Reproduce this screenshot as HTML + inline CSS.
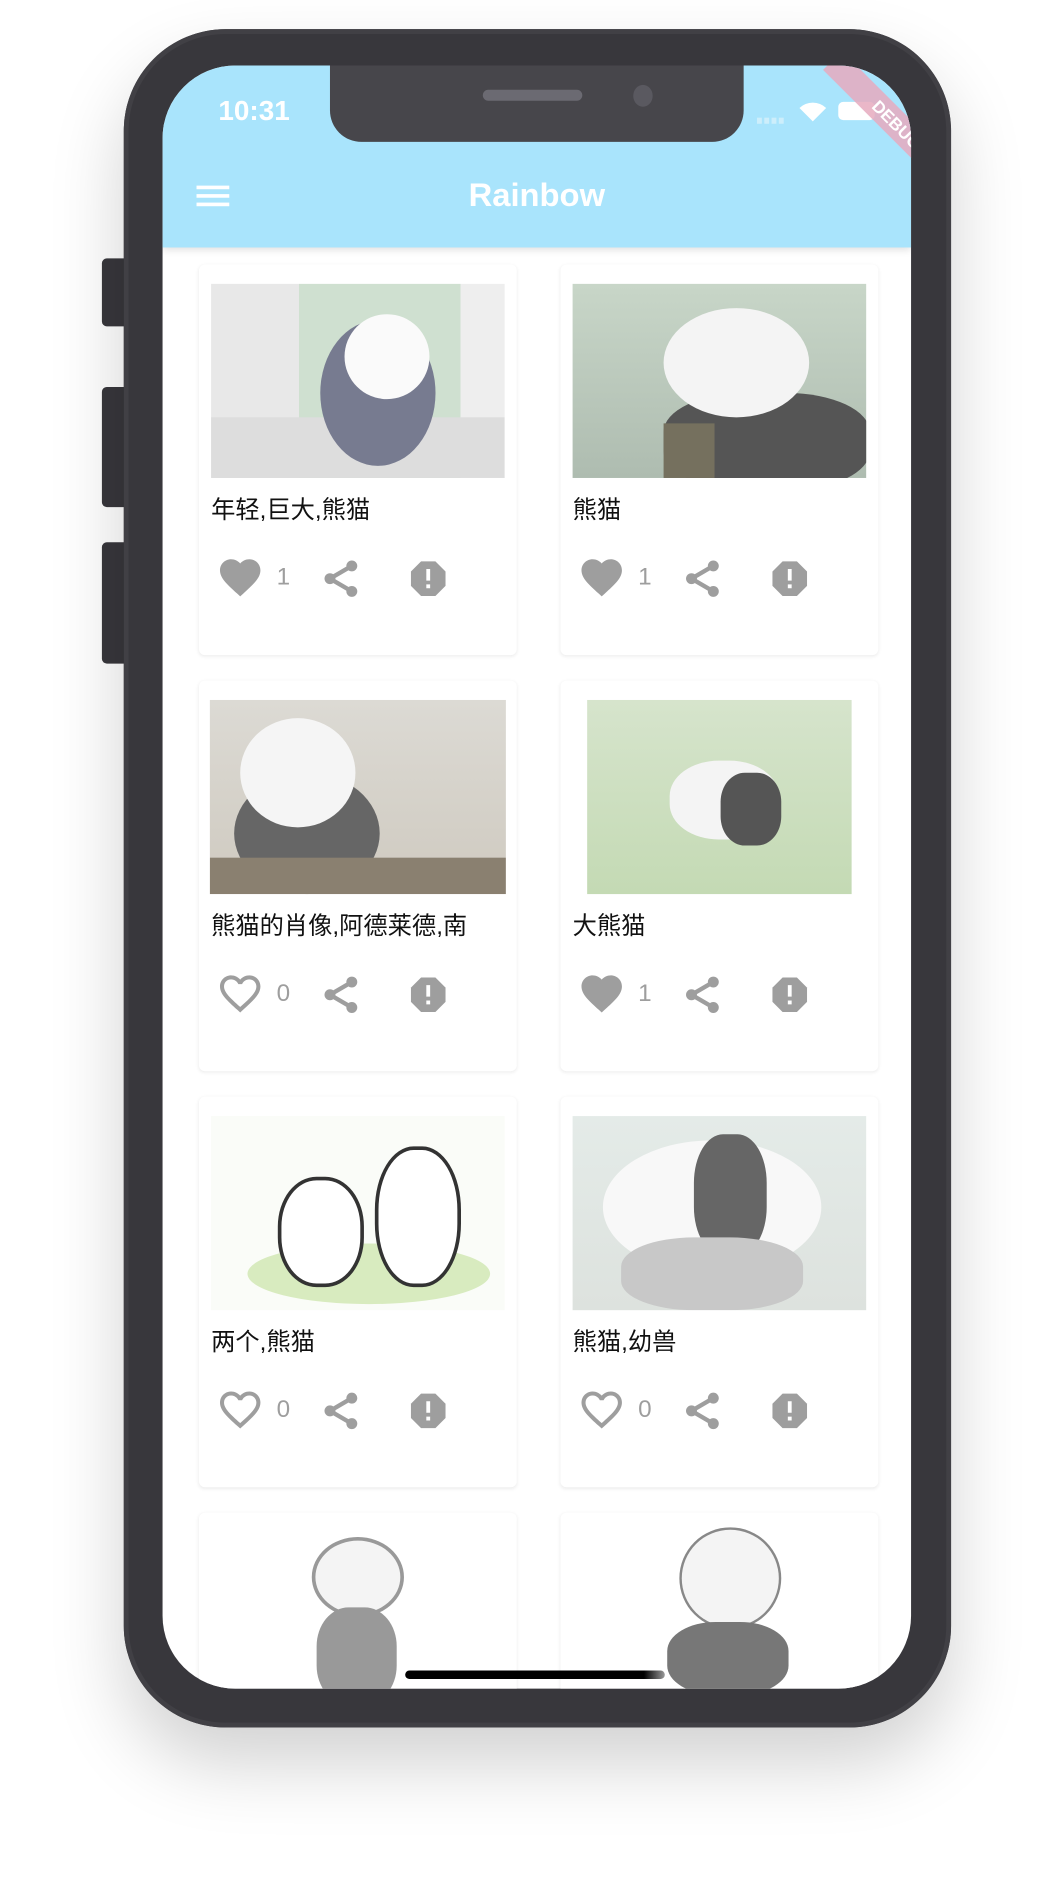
<!DOCTYPE html>
<html><head><meta charset="utf-8">
<style>
html,body{margin:0;padding:0;background:#fff;width:1053px;height:1903px;overflow:hidden}
#w{position:absolute;left:0;top:0;width:868px;height:1569px;transform:scale(1.21313);transform-origin:0 0;font-family:"Liberation Sans","Noto Sans CJK SC",sans-serif}
.body{position:absolute;left:102px;top:24px;width:682px;height:1400px;border-radius:84px;background:#38373c;box-shadow:0 30px 60px rgba(0,0,0,.18),inset 0 0 0 4px #414045}
.btn{position:absolute;left:84px;width:20px;background:#38373c;border-radius:4px 0 0 4px}
.screen{position:absolute;left:134px;top:54px;width:617px;height:1338px;border-radius:60px;background:#fff;overflow:hidden}
.appbar{position:absolute;left:0;top:0;width:617px;height:150px;background:#a9e4fc;box-shadow:0 2px 6px rgba(0,0,0,.12)}
.notch{position:absolute;left:138px;top:0;width:341px;height:63px;background:#47464b;border-radius:0 0 26px 26px}
.card{position:absolute;width:262px;height:322px;background:#fff;border-radius:5px;box-shadow:0 1px 3px rgba(0,0,0,.08)}
.img{position:absolute;left:10px;top:16px;width:242px;height:160px;overflow:hidden}
.t{position:absolute;left:10px;top:186px;font-size:20px;color:#111;white-space:nowrap}
</style></head><body><div id="w">
<div class="btn" style="top:213px;height:56px"></div>
<div class="btn" style="top:319px;height:99px"></div>
<div class="btn" style="top:447px;height:100px"></div>
<div class="body"></div>
<div class="screen">
 <div class="appbar">
  <div style="position:absolute;left:46px;top:24px;color:#fff;font-size:23px;font-weight:bold">10:31</div>
  <div style="position:absolute;left:28px;top:99px;width:27px;height:3px;background:#fff;box-shadow:0 7px 0 #fff,0 14px 0 #fff"></div>
  <div style="position:absolute;left:0;width:617px;top:92px;text-align:center;color:#fff;font-size:27px;font-weight:bold">Rainbow</div>
  <div style="position:absolute;left:490px;top:43px;width:4px;height:5px;background:#cdeefb;box-shadow:6px 0 0 #cdeefb,12px 0 0 #cdeefb,18px 0 0 #cdeefb"></div>
  <svg style="position:absolute;left:524px;top:29px" width="24" height="18" viewBox="0 0 24 18"><path d="M12 17 L1 6 A16 16 0 0 1 23 6Z" fill="#fff"/></svg>
  <div style="position:absolute;left:557px;top:30px;width:30px;height:15px;border-radius:4px;background:#fff"></div>
  <div style="position:absolute;width:150px;height:22px;background:rgba(230,170,190,.85);transform:rotate(45deg);transform-origin:0 0;left:560px;top:-12px;color:#fff;font-weight:bold;font-size:14px;text-align:center;line-height:22px">DEBUG</div>
 </div>
 <div class="notch">
  <div style="position:absolute;left:126px;top:20px;width:82px;height:9px;border-radius:5px;background:#6b6a72"></div>
  <div style="position:absolute;left:250px;top:16px;width:16px;height:18px;border-radius:50%;background:#5a5960"></div>
 </div>

 <div class="card" style="left:30px;top:164px">
  <div class="img" style="background:linear-gradient(90deg,#e8e8e8 0 30%,#cfe0d0 30% 85%,#eee 85%)"><div style="position:absolute;left:0;top:110px;width:242px;height:50px;background:#ddd"></div><div style="position:absolute;left:90px;top:30px;width:95px;height:120px;border-radius:50%;background:#777b90"></div><div style="position:absolute;left:110px;top:25px;width:70px;height:70px;border-radius:50%;background:#fafafa"></div></div>
  <div class="t">年轻,巨大,熊猫</div>
 </div>
 <div class="card" style="left:328px;top:164px">
  <div class="img" style="background:linear-gradient(#c8d6c8,#aebcb0)"><div style="position:absolute;left:75px;top:90px;width:170px;height:80px;border-radius:40%;background:#555"></div><div style="position:absolute;left:75px;top:20px;width:120px;height:90px;border-radius:50%;background:#f4f4f4"></div><div style="position:absolute;left:75px;top:115px;width:42px;height:45px;background:#75705e"></div></div>
  <div class="t">熊猫</div>
 </div>
 <div class="card" style="left:30px;top:507px">
  <div class="img" style="left:9px;width:244px;background:linear-gradient(#dcdad4,#cfcac0)"><div style="position:absolute;left:20px;top:60px;width:120px;height:100px;border-radius:50%;background:#666"></div><div style="position:absolute;left:25px;top:15px;width:95px;height:90px;border-radius:50%;background:#f5f5f5"></div><div style="position:absolute;left:0;top:130px;width:244px;height:30px;background:#8a8070"></div></div>
  <div class="t">熊猫的肖像,阿德莱德,南</div>
 </div>
 <div class="card" style="left:328px;top:507px">
  <div class="img" style="left:22px;width:218px;background:linear-gradient(#d6e4cc,#c4dab4)"><div style="position:absolute;left:68px;top:50px;width:90px;height:65px;border-radius:45%;background:#f4f4f4"></div><div style="position:absolute;left:110px;top:60px;width:50px;height:60px;border-radius:40%;background:#555"></div></div>
  <div class="t">大熊猫</div>
 </div>
 <div class="card" style="left:30px;top:850px">
  <div class="img" style="background:#fafcf8"><div style="position:absolute;left:30px;top:105px;width:200px;height:50px;border-radius:50%;background:#d8ebbf"></div><div style="position:absolute;left:55px;top:50px;width:65px;height:85px;border-radius:45%;background:#fff;border:3px solid #333"></div><div style="position:absolute;left:135px;top:25px;width:65px;height:110px;border-radius:45%;background:#fff;border:3px solid #333"></div></div>
  <div class="t">两个,熊猫</div>
 </div>
 <div class="card" style="left:328px;top:850px">
  <div class="img" style="background:linear-gradient(#e4ebe8,#dde2de)"><div style="position:absolute;left:25px;top:20px;width:180px;height:110px;border-radius:50%;background:#f8f8f8"></div><div style="position:absolute;left:100px;top:15px;width:60px;height:100px;border-radius:40%;background:#666"></div><div style="position:absolute;left:40px;top:100px;width:150px;height:60px;border-radius:40%;background:#c8c8c8"></div></div>
  <div class="t">熊猫,幼兽</div>
 </div>
 <div class="card" style="left:30px;top:1193px">
  <div style="position:absolute;left:93px;top:20px;width:70px;height:60px;border-radius:50%;background:#f4f4f4;border:3px solid #999"></div>
  <div style="position:absolute;left:97px;top:78px;width:66px;height:80px;border-radius:40%;background:#999"></div>
 </div>
 <div class="card" style="left:328px;top:1193px">
  <div style="position:absolute;left:100px;top:14px;width:80px;height:80px;border-radius:50%;background:#f4f4f4;box-shadow:0 0 0 2px #888"></div>
  <div style="position:absolute;left:88px;top:90px;width:100px;height:60px;border-radius:40%;background:#777"></div>
 </div>
 <div style="position:absolute;left:200px;top:1323px;width:214px;height:7px;border-radius:4px;background:linear-gradient(90deg,#000 0 92%,#999)"></div>
</div>
<svg width="0" height="0" style="position:absolute"><defs>
<symbol id="hf" viewBox="0 0 24 24"><path d="M12 21.35l-1.45-1.32C5.4 15.36 2 12.28 2 8.5 2 5.42 4.42 3 7.5 3c1.74 0 3.41.81 4.5 2.09C13.09 3.81 14.76 3 16.5 3 19.58 3 22 5.420 22 8.5c0 3.78-3.4 6.86-8.550 11.54L12 21.35z" fill="#9e9e9e"/></symbol>
<symbol id="ho" viewBox="0 0 24 24"><path d="M16.5 3c-1.74 0-3.41.81-4.5 2.09C10.91 3.81 9.24 3 7.5 3 4.42 3 2 5.42 2 8.5c0 3.78 3.4 6.86 8.55 11.54L12 21.35l1.45-1.32C18.6 15.36 22 12.28 22 8.5 22 5.42 19.58 3 16.5 3zm-4.4 15.55l-.1.1-.1-.1C7.14 14.24 4 11.39 4 8.5 4 6.5 5.5 5 7.5 5c1.54 0 3.04.99 3.57 2.36h1.87C13.46 5.99 14.96 5 16.5 5c2 0 3.5 1.5 3.5 3.5 0 2.89-3.14 5.74-7.9 10.05z" fill="#9e9e9e"/></symbol>
<symbol id="sh" viewBox="0 0 24 24"><circle cx="18" cy="5" r="3" fill="#9e9e9e"/><circle cx="6" cy="12" r="3" fill="#9e9e9e"/><circle cx="18" cy="19" r="3" fill="#9e9e9e"/><path d="M6 12L18 5M6 12l12 7" stroke="#9e9e9e" stroke-width="2.4"/></symbol>
<symbol id="rp" viewBox="0 0 24 24"><path d="M15.73 3H8.27L3 8.27v7.46L8.27 21h7.46L21 15.73V8.27L15.73 3z" fill="#9e9e9e"/><path d="M11 7h2v6h-2zM11 15h2v2h-2z" fill="#fff"/></symbol>
</defs></svg>
<div id="icons"></div>
</div>
<script>
var pos=[[164,218,1],[462,218,1],[164,561,0],[462,561,1],[164,904,0],[462,904,0]];
var h='';pos.forEach(function(p){var x=p[0],y=p[1]+238;
h+='<svg style="position:absolute;left:'+(x+14)+'px;top:'+(y)+'px" width="40" height="40"><use href="#'+(p[2]?'hf':'ho')+'"/></svg>';
h+='<div style="position:absolute;left:'+(x+64)+'px;top:'+(y+9)+'px;font-size:20px;color:#9e9e9e">'+p[2]+'</div>';
h+='<svg style="position:absolute;left:'+(x+99)+'px;top:'+(y+3)+'px" width="36" height="36"><use href="#sh"/></svg>';
h+='<svg style="position:absolute;left:'+(x+170)+'px;top:'+(y+2)+'px" width="38" height="38"><use href="#rp"/></svg>';});
document.getElementById('icons').innerHTML=h;
</script>
</body></html>
